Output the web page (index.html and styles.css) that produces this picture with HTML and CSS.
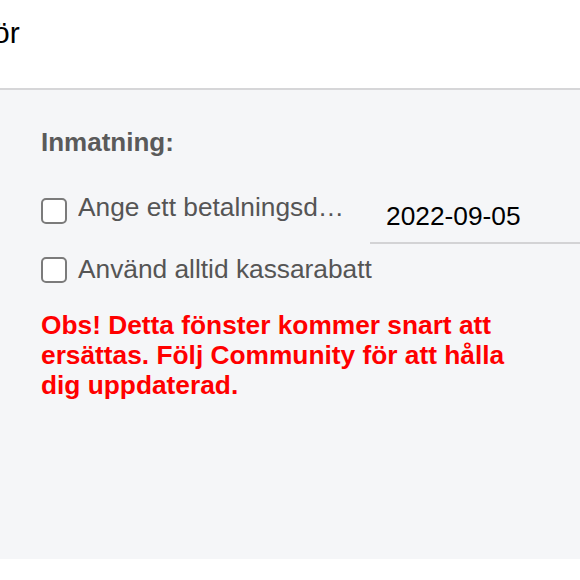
FILE: index.html
```html
<!DOCTYPE html>
<html lang="sv">
<head>
<meta charset="utf-8">
<title>Inmatning</title>
<link rel="stylesheet" href="styles.css">
</head>
<body>
<header class="topbar">
  <span class="title">ör</span>
</header>
<main class="panel">
  <h2 class="heading">Inmatning:</h2>
  <div class="row row-first">
    <label class="check">
      <input type="checkbox" class="box">
      <span class="label-text clipped">Ange ett betalningsdatum</span>
    </label>
    <div class="date-field">2022-09-05</div>
  </div>
  <div class="row row-second">
    <label class="check">
      <input type="checkbox" class="box box-second">
      <span class="label-text">Använd alltid kassarabatt</span>
    </label>
  </div>
  <p class="notice">Obs! Detta fönster kommer snart att ersättas. Följ Community för att hålla dig uppdaterad.</p>
</main>
</body>
</html>
```

FILE: styles.css
```css
html, body {
  margin: 0;
  padding: 0;
  overflow: hidden;
  background: #ffffff;
  font-family: "Liberation Sans", Arial, sans-serif;
}

.topbar {
  height: 72px;
  padding-top: 16px;
  border-bottom: 2px solid #d6d6d8;
  background: #ffffff;
  overflow: hidden;
}

.title {
  display: inline-block;
  margin-left: -7px;
  font-size: 30px;
  color: #000000;
}

.panel {
  height: 469px;
  box-sizing: border-box;
  padding: 37px 0 0 41px;
  background: #f5f6f8;
  overflow: hidden;
}

.heading {
  margin: 0;
  font-size: 26px;
  font-weight: bold;
  color: #5a5a5a;
}

.row {
  display: flex;
  align-items: flex-start;
}

.row-first {
  margin-top: 34px;
}

.row-second {
  margin-top: 10px;
}

.check {
  display: flex;
  align-items: flex-start;
  gap: 11px;
}

.box {
  appearance: none;
  -webkit-appearance: none;
  flex: none;
  width: 26px;
  height: 26px;
  margin: 6px 0 0 0;
  box-sizing: border-box;
  border: 2px solid #7b7b7b;
  border-radius: 5px;
  background: #ffffff;
}

.box-second {
  margin-top: 3px;
}

.label-text {
  font-size: 26.3px;
  line-height: 30px;
  color: #555555;
  white-space: nowrap;
}

.clipped {
  display: block;
  width: 272px;
  overflow: hidden;
  text-overflow: ellipsis;
}

.date-field {
  flex: none;
  width: 260px;
  margin: 3px 0 0 20px;
  padding: 6px 0 11px 16px;
  font-size: 26.3px;
  line-height: 30px;
  color: #000000;
  border-bottom: 2px solid #d3d3d5;
}

.notice {
  width: 480px;
  margin: 26px 0 0 0;
  font-size: 26.3px;
  line-height: 30px;
  font-weight: bold;
  color: #ff0000;
}
```
